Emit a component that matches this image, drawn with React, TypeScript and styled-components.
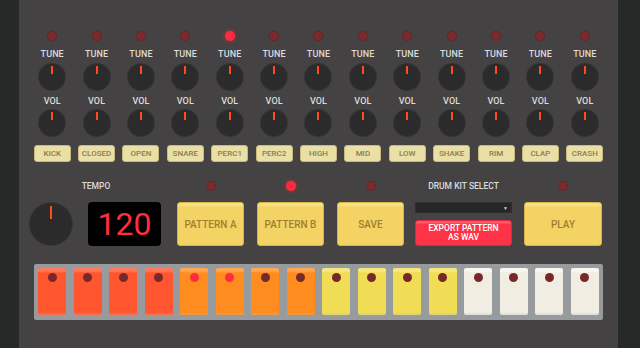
import styled, { createGlobalStyle } from 'styled-components'

const GlobalStyle = createGlobalStyle`
    html, body {
        margin: 0;
        padding: 0;
        background: #272928;
        font-family: Roboto, "Liberation Sans", sans-serif;
    }
`

const Page = styled.div`
    display: flex;
    width: 640px;
    height: 348px;
    background: #272928;
`

const Panel = styled.main`
    width: 599px;
    height: 348px;
    margin-left: 19px;
    box-sizing: border-box;
    padding: 31px 11px 0;
    background: #444242;
    display: flex;
    flex-direction: column;
`

const Channels = styled.div`
    display: grid;
    grid-template-columns: repeat(13, 1fr);
`

const Channel = styled.div`
    display: flex;
    flex-direction: column;
    align-items: center;
`

const Led = styled.div<{ $on?: boolean }>`
    width: 10px;
    height: 10px;
    border-radius: 50%;
    background: ${p => (p.$on ? '#ff2a3e' : '#7b2b2d')};
    box-shadow: ${p => (p.$on ? '0 0 4px rgba(255, 40, 60, 0.7)' : 'inset 0 0 0 1px rgba(0,0,0,0.15)')};
`

const Label = styled.div<{ $top?: number }>`
    margin-top: ${p => p.$top ?? 0}px;
    height: 12px;
    line-height: 12px;
    font-size: 9px;
    font-weight: 500;
    color: #dcdcdc;
    letter-spacing: 0.1px;
`

const Knob = styled.div<{ $size: number; $top?: number }>`
    position: relative;
    width: ${p => p.$size}px;
    height: ${p => p.$size}px;
    margin-top: ${p => p.$top ?? 0}px;
    border-radius: 50%;
    background: #2c2b2b;
    box-shadow: 0 0 0 1px #363535;

    &::after {
        content: '';
        position: absolute;
        left: 50%;
        top: ${p => Math.round(p.$size * 0.08)}px;
        width: 2px;
        margin-left: -1px;
        height: ${p => Math.round(p.$size * 0.3)}px;
        background: #ff4b1f;
    }
`

const ChannelButton = styled.button`
    margin-top: 9px;
    width: 37px;
    height: 17px;
    padding: 0;
    box-sizing: border-box;
    border: 1px solid #c8b97c;
    border-radius: 3px;
    background: #eadfa5;
    color: #8c7d4c;
    font-family: Roboto, "Liberation Sans", sans-serif;
    font-size: 8px;
    font-weight: 500;
    white-space: nowrap;
`

const Controls = styled.div`
    display: flex;
    margin-top: 18px;
`

const Section = styled.div<{ $width: number; $gap?: number }>`
    width: ${p => p.$width}px;
    margin-right: ${p => p.$gap ?? 0}px;
    display: flex;
    flex-direction: column;
    align-items: center;
`

const Header = styled.div`
    height: 12px;
    display: flex;
    align-items: center;
    justify-content: center;
    font-size: 8.5px;
    font-weight: 500;
    color: #dcdcdc;
`

const SectionBody = styled.div`
    margin-top: 10px;
    height: 44px;
    width: 100%;
    display: flex;
    align-items: center;
    gap: 16px;
`

const Display = styled.div`
    width: 73px;
    height: 44px;
    border-radius: 4px;
    background: #000;
    color: #ff2d40;
    font-size: 32px;
    line-height: 44px;
    text-align: center;
`

const YellowButton = styled.button`
    width: 100%;
    height: 44px;
    padding: 0;
    border: 1px solid #d3b54c;
    border-radius: 3px;
    background: linear-gradient(#f7df7e 0, #f7df7e 3px, #f2d363 4px, #f2d363 100%);
    color: #a17e2f;
    font-family: Roboto, "Liberation Sans", sans-serif;
    font-size: 10px;
    font-weight: 500;
`

const KitStack = styled.div`
    margin-top: 10px;
    width: 100%;
    display: flex;
    flex-direction: column;
    gap: 7px;
`

const Select = styled.div`
    height: 11px;
    box-sizing: border-box;
    border: 1px solid #2f2f2f;
    background: #262626;
    display: flex;
    align-items: center;
    justify-content: flex-end;
    padding-right: 3px;
    color: #cfcfcf;
    font-size: 5px;
`

const ExportButton = styled.button`
    height: 26px;
    padding: 0;
    border: 1px solid #d92a3c;
    border-radius: 3px;
    background: linear-gradient(#ff5566 0, #ff5566 2px, #ff3347 3px, #ff3347 100%);
    color: #fff;
    font-family: Roboto, "Liberation Sans", sans-serif;
    font-size: 8.5px;
    font-weight: 500;
    line-height: 9.5px;
`

const SeqBar = styled.div`
    margin-top: 18px;
    margin-left: 4px;
    width: 569px;
    box-sizing: border-box;
    padding: 4px 4px 5px;
    border-radius: 2px;
    background: #979b9e;
    display: flex;
    justify-content: space-between;
`

const Pad = styled.div<{ $color: string; $light: string }>`
    width: 28px;
    height: 47px;
    box-sizing: border-box;
    border-radius: 2px;
    border-bottom: 2px solid rgba(0, 0, 0, 0.08);
    background: linear-gradient(${p => p.$light} 0, ${p => p.$light} 3px, ${p => p.$color} 5px, ${p => p.$color} 100%);
    display: flex;
    justify-content: center;
    padding-top: 5px;
`

const PadDot = styled.div<{ $on?: boolean }>`
    width: 9px;
    height: 9px;
    border-radius: 50%;
    background: ${p => (p.$on ? '#ff2b3f' : '#77292a')};
`

const channels = ['KICK', 'CLOSED', 'OPEN', 'SNARE', 'PERC1', 'PERC2', 'HIGH', 'MID', 'LOW', 'SHAKE', 'RIM', 'CLAP', 'CRASH']

const padColors = [
    { color: '#ff5630', light: '#ff7a5a' },
    { color: '#ff8c1f', light: '#ffa64f' },
    { color: '#f1dd55', light: '#f6e77e' },
    { color: '#f1ede2', light: '#f8f6ef' },
]

export default function App() {
    return (
        <Page>
            <GlobalStyle />
            <Panel>
                <Channels>
                    {channels.map((name, i) => (
                        <Channel key={name}>
                            <Led $on={i === 4} />
                            <Label $top={7}>TUNE</Label>
                            <Knob $size={26} $top={4} />
                            <Label $top={5}>VOL</Label>
                            <Knob $size={26} $top={3} />
                            <ChannelButton>{name}</ChannelButton>
                        </Channel>
                    ))}
                </Channels>
                <Controls>
                    <Section $width={132} $gap={15}>
                        <Header>TEMPO</Header>
                        <SectionBody>
                            <Knob $size={42} />
                            <Display>120</Display>
                        </SectionBody>
                    </Section>
                    <Section $width={67} $gap={13}>
                        <Header><Led /></Header>
                        <SectionBody>
                            <YellowButton>PATTERN A</YellowButton>
                        </SectionBody>
                    </Section>
                    <Section $width={67} $gap={13}>
                        <Header><Led $on /></Header>
                        <SectionBody>
                            <YellowButton>PATTERN B</YellowButton>
                        </SectionBody>
                    </Section>
                    <Section $width={67} $gap={11}>
                        <Header><Led /></Header>
                        <SectionBody>
                            <YellowButton>SAVE</YellowButton>
                        </SectionBody>
                    </Section>
                    <Section $width={97} $gap={12}>
                        <Header>DRUM KIT SELECT</Header>
                        <KitStack>
                            <Select>▼</Select>
                            <ExportButton>EXPORT PATTERN<br />AS WAV</ExportButton>
                        </KitStack>
                    </Section>
                    <Section $width={78}>
                        <Header><Led /></Header>
                        <SectionBody>
                            <YellowButton>PLAY</YellowButton>
                        </SectionBody>
                    </Section>
                </Controls>
                <SeqBar>
                    {Array.from({ length: 16 }, (_, i) => {
                        const c = padColors[Math.floor(i / 4)]
                        return (
                            <Pad key={i} $color={c.color} $light={c.light}>
                                <PadDot $on={i === 4 || i === 5} />
                            </Pad>
                        )
                    })}
                </SeqBar>
            </Panel>
        </Page>
    )
}
